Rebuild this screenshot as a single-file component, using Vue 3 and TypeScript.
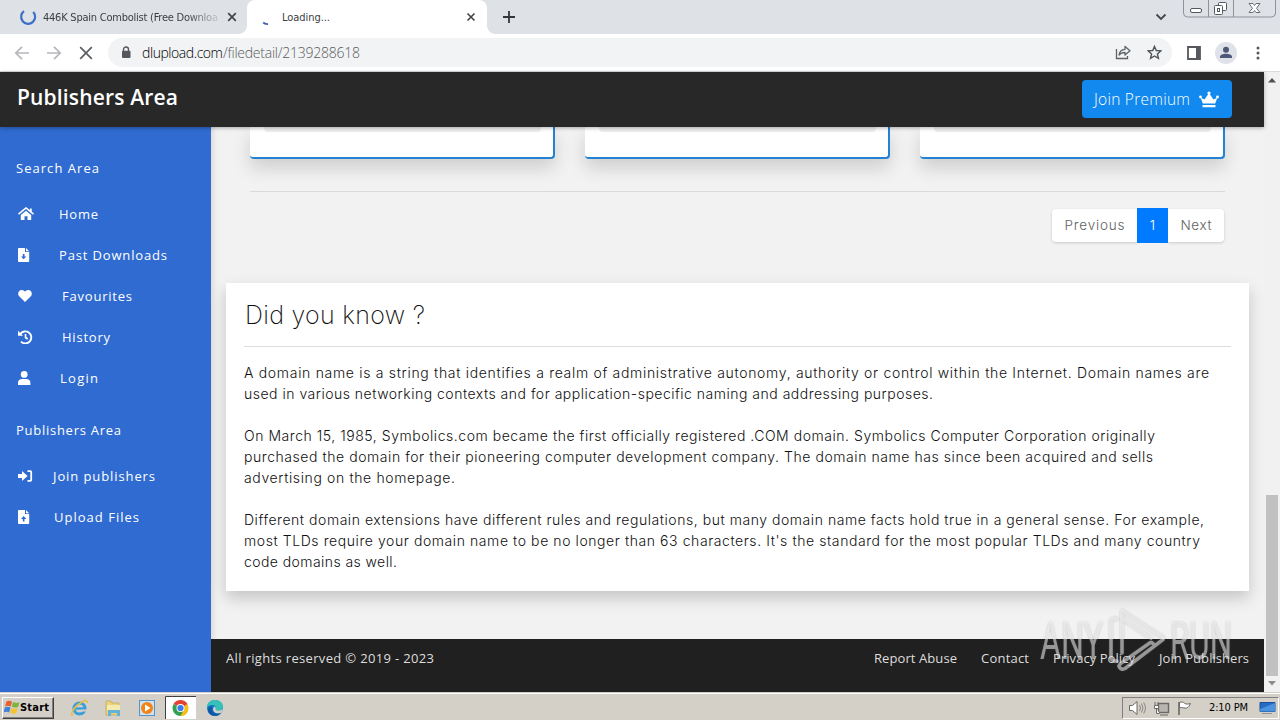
<script setup lang="ts">
import type { Directive } from 'vue'

// Spreads the letters of a single line of text over the given width in pixels.
const vFit: Directive<HTMLElement, number> = {
  mounted(el, binding) {
    const range = document.createRange()
    range.selectNodeContents(el)
    const natural = range.getBoundingClientRect().width
    const count = (el.textContent ?? '').trim().length
    el.style.width = `${binding.value}px`
    if (count > 1) el.style.letterSpacing = `${(binding.value - natural) / (count - 1)}px`
  },
}

interface NavItem { icon: string; label: string; offset: string; width: number }

const searchItems: NavItem[] = [
  { icon: 'home', label: 'Home', offset: 'o59', width: 39 },
  { icon: 'down', label: 'Past Downloads', offset: 'o59', width: 108 },
  { icon: 'heart', label: 'Favourites', offset: 'o62', width: 70 },
  { icon: 'history', label: 'History', offset: 'o62', width: 48 },
  { icon: 'user', label: 'Login', offset: 'o60', width: 38 },
]
const publisherItems: NavItem[] = [
  { icon: 'login', label: 'Join publishers', offset: 'o53', width: 102 },
  { icon: 'up', label: 'Upload Files', offset: 'o54', width: 85 },
]
const groups = [
  { title: 'Search Area', width: 83, items: searchItems },
  { title: 'Publishers Area', width: 105, items: publisherItems },
]

const paragraphs: { text: string; width: number }[][] = [
  [
    { text: 'A domain name is a string that identifies a realm of administrative autonomy, authority or control within the Internet. Domain names are', width: 965 },
    { text: 'used in various networking contexts and for application-specific naming and addressing purposes.', width: 689 },
  ],
  [
    { text: 'On March 15, 1985, Symbolics.com became the first officially registered .COM domain. Symbolics Computer Corporation originally', width: 911 },
    { text: 'purchased the domain for their pioneering computer development company. The domain name has since been acquired and sells', width: 909 },
    { text: 'advertising on the homepage.', width: 211 },
  ],
  [
    { text: 'Different domain extensions have different rules and regulations, but many domain name facts hold true in a general sense. For example,', width: 960 },
    { text: "most TLDs require your domain name to be no longer than 63 characters. It's the standard for the most popular TLDs and many country", width: 956 },
    { text: 'code domains as well.', width: 153 },
  ],
]

const links = [
  { label: 'Report Abuse', width: 83 },
  { label: 'Contact', width: 48 },
  { label: 'Privacy Policy', width: 82 },
  { label: 'Join Publishers', width: 90 },
]
</script>

<template>
  <div class="screen">
    <div class="tabstrip">
      <div class="tab">
        <svg class="spin" width="18" height="18" viewBox="0 0 18 18"><path d="M5 3.2A7 7 0 1 0 14.200 4" fill="none" stroke="#3b6fc9" stroke-width="2.2" /></svg>
        <span class="tab-title faded"><span v-fit="175" class="t">446K Spain Combolist (Free Downloa</span></span>
        <svg class="close" width="10" height="10" viewBox="0 0 10 10"><path d="M1.200 1.200l7.600 7.600M8.800 1.200l-7.600 7.600" stroke="#41454a" stroke-width="1.7" /></svg>
      </div>
      <div class="tab active">
        <svg class="spin" width="18" height="18" viewBox="0 0 18 18"><path d="M5.2 14.5Q7 16.3 10 16" fill="none" stroke="#3f63b5" stroke-width="1.8" /></svg>
        <span class="tab-title"><span v-fit="48" class="t">Loading...</span></span>
        <svg class="close" width="10" height="10" viewBox="0 0 10 10"><path d="M1.500 1.500l7 7M8.500 1.500l-7 7" stroke="#41454a" stroke-width="1.6" /></svg>
      </div>
      <svg class="plus" width="12" height="12" viewBox="0 0 12 12"><path d="M6 0v12M0 6h12" stroke="#33373b" stroke-width="1.8" /></svg>
      <svg class="chev" width="12" height="8" viewBox="0 0 12 8"><path d="M1.5 1.5L6 6l4.500-4.500" fill="none" stroke="#44474c" stroke-width="1.8" /></svg>
      <svg class="winctl" width="94" height="18" viewBox="0 0 94 18">
        <path d="M.5-2v15a4 4 0 0 0 4 4h84a4 4 0 0 0 4-4V-2M25.500 0v17M50.500 0v17" fill="none" stroke="#8e9299" />
        <rect x="7.500" y="8.500" width="11" height="4" rx="1.500" fill="#fff" stroke="#55595f" />
        <rect x="35.500" y="2.500" width="8" height="8" rx="1" fill="#fff" stroke="#55595f" />
        <rect x="31.500" y="5.500" width="8" height="9" rx="1" fill="#fff" stroke="#55595f" />
        <rect x="34.500" y="8.500" width="2" height="3" fill="#fff" stroke="#55595f" />
        <path d="M66 3.500h4l1.500 2 1.500-2h4L73.500 8.300 77 12.500h-4l-1.500-2-1.500 2h-4l3.500-4.200z" fill="#fff" stroke="#6b6f75" />
      </svg>
    </div>

    <div class="toolbar">
      <svg class="nav-ic" width="90" height="16" viewBox="0 0 90 16">
        <g fill="none" stroke-width="1.7">
          <path d="M15 8H2M8 1.800L1.800 8 8 14.200" stroke="#b5b7ba" />
          <path d="M33 8h13M40 1.800L46.200 8 40 14.200" stroke="#b5b7ba" />
          <path d="M66.200 2.200l11.600 11.600M77.800 2.200l-11.600 11.600" stroke="#5b5e62" />
        </g>
      </svg>
      <div class="omnibox">
        <svg class="lock" width="10" height="13" viewBox="0 0 10 13"><path d="M2.500 6V3.500a2.500 2.500 0 0 1 5 0V6" fill="none" stroke="#54585d" stroke-width="1.400" /><rect x="1" y="4.800" width="8.500" height="7.200" rx="1" fill="#54585d" /></svg>
        <span class="url"><span v-fit="81" class="host t">dlupload.com</span><span v-fit="137" class="path t">/filedetail/2139288618</span></span>
        <svg class="share" width="17" height="15" viewBox="0 0 17 15" fill="none" stroke="#5f6368" stroke-width="1.300"><path d="M1.500 4v9.500h11V11" /><path d="M4 10c.5-3.800 3-5.500 6-5.700V1.500l5 4.300-5 4.200V7.500C7.500 7.500 5.500 8 4 10z" stroke-linejoin="round" /></svg>
        <svg class="star" width="15" height="15" viewBox="0 0 16 16"><path d="M8 1.500l1.900 4.400 4.800.4-3.600 3.200 1.100 4.700L8 11.700l-4.200 2.500 1.100-4.700L1.300 6.300l4.800-.4z" fill="none" stroke="#4f5358" stroke-width="1.500" /></svg>
      </div>
      <svg class="side" width="14" height="14" viewBox="0 0 14 14"><path d="M1 1h12v12H1z" fill="none" stroke="#55585d" stroke-width="1.800" /><path d="M9 1h4v12H9z" fill="#55585d" /></svg>
      <svg class="avatar" width="22" height="22" viewBox="0 0 22 22"><circle cx="11" cy="11" r="11" fill="#dfe2e8" /><circle cx="11" cy="7.800" r="3" fill="#4c5a78" /><path d="M5 16v-1.200c0-4 12-4 12 0V16z" fill="#4c5a78" /></svg>
      <svg class="dots" width="4" height="14" viewBox="0 0 4 14" fill="#55585d"><circle cx="2" cy="2" r="1.500" /><circle cx="2" cy="7" r="1.500" /><circle cx="2" cy="12" r="1.500" /></svg>
    </div>

    <div class="page">
      <div class="view">
        <header class="navbar">
          <span v-fit="161" class="brand t">Publishers Area</span>
          <button class="premium">
            <span v-fit="96" class="t">Join Premium</span>
            <svg width="20" height="17" viewBox="0 0 20 17" fill="#fff"><path d="M3.800 12.500L1.700 6.800l3.800 1.700L9.300 3h1.400l3.800 5.500 3.800-1.700-2.100 5.700z" /><circle cx="10" cy="2" r="1.600" /><circle cx="1.500" cy="6" r="1.400" /><circle cx="18.500" cy="6" r="1.400" /><rect x="3.500" y="14" width="13" height="2.300" rx=".6" /></svg>
          </button>
        </header>
        <div class="body">
          <nav class="sidebar">
            <section v-for="g in groups" :key="g.title" class="group">
              <h4><span v-fit="g.width" class="t">{{ g.title }}</span></h4>
              <a v-for="i in g.items" :key="i.label" :class="i.offset">
                <svg width="16" height="14" viewBox="0 0 16 14" fill="#fff">
                  <template v-if="i.icon === 'home'"><path d="M.5 7.200L8 1l7.500 6.200" fill="none" stroke="#fff" stroke-width="1.600" /><path d="M11.800 1.500h1.900v4l-1.900-1.600zM2.800 8L8 3.700 13.200 8v5H9.500V9.200h-3V13H2.800z" /></template>
                  <template v-else-if="i.icon === 'down' || i.icon === 'up'">
                    <path d="M1 0h6v4h4.200v9.200a.8.8 0 0 1-.8.800H.8a.8.8 0 0 1-.8-.8V.8A.8.800 0 0 1 .8 0zM8 0l3.200 3.200H8z" />
                    <path v-if="i.icon === 'down'" d="M4.800 6h1.700v2.500h1.800L5.650 11.300 3 8.500h1.800z" fill="#2f6bd0" />
                    <path v-else d="M4.800 11.500h1.700V9h1.800L5.650 6.100 3 9h1.800z" fill="#2f6bd0" />
                  </template>
                  <path v-else-if="i.icon === 'heart'" d="M7 13L1.200 7.300C-.8 5.200.3 1 3.700 1 5.300 1 6.300 1.900 7 2.700 7.700 1.900 8.700 1 10.300 1c3.400 0 4.500 4.200 2.500 6.300z" />
                  <g v-else-if="i.icon === 'history'"><path d="M2.200 4.200A6 6 0 1 1 3 11.600" fill="none" stroke="#fff" stroke-width="1.900" /><path d="M0 .8l5 4.900H0z" /><path d="M7.500 4v3.500L9.700 9" fill="none" stroke="#fff" stroke-width="1.600" /></g>
                  <template v-else-if="i.icon === 'user'"><circle cx="6.200" cy="3.400" r="3.400" /><path d="M0 14v-2.200C0 9.200 1.800 8 4 8h4.400c2.200 0 4 1.200 4 3.800V14z" /></template>
                  <template v-else><path d="M0 5h4V2l5.600 5L4 12V9H0z" /><path d="M9.500 2.200h2.700c.7 0 1 .4 1 1v7.600c0 .6-.3 1-1 1H9.500" fill="none" stroke="#fff" stroke-width="1.800" /></template>
                </svg>
                <span v-fit="i.width" class="t">{{ i.label }}</span>
              </a>
            </section>
          </nav>
          <div class="content">
            <div class="results">
              <div class="tiles"><div v-for="n in 3" :key="n" class="tile"><div class="tile-inner"></div></div></div>
              <div class="rule"></div>
              <div class="pager">
                <span class="pg prev"><span v-fit="60" class="t">Previous</span></span>
                <span class="pg on">1</span>
                <span class="pg next"><span v-fit="31" class="t">Next</span></span>
              </div>
            </div>
            <article class="fact">
              <h2><span v-fit="180" class="t">Did you know ?</span></h2>
              <p v-for="(p, k) in paragraphs" :key="k">
                <span v-for="l in p" :key="l.text" v-fit="l.width" class="line t">{{ l.text }}</span>
              </p>
            </article>
            <footer>
              <span v-fit="208" class="t">All rights reserved © 2019 - 2023</span>
              <div class="links"><a v-for="l in links" :key="l.label" v-fit="l.width" class="t">{{ l.label }}</a></div>
            </footer>
          </div>
        </div>
      </div>
      <div class="scrollbar">
        <svg width="16" height="17" viewBox="0 0 16 17"><path d="M4 10.500l4-4.500 4 4.500z" fill="#505050" /></svg>
        <div class="thumb"></div>
        <svg width="16" height="17" viewBox="0 0 16 17"><path d="M4 6l4 4.500L12 6z" fill="#8b8b8b" /></svg>
      </div>
    </div>

    <div class="taskbar">
      <div class="start">
        <svg width="16" height="15" viewBox="0 0 16 15"><path d="M2.500 1.500Q5-.2 8 1.700L6.800 6.500Q4 5 1 6.500z" fill="#e8602c" /><path d="M9 2.100q3 1.500 6.500.2L14 7q-3 1.200-6.200-.2z" fill="#7db53c" /><path d="M.8 7.600Q4 6 6.500 7.600L5.200 12.500Q3 11-.4 12.400z" fill="#3f83d8" /><path d="M7.500 8q3 1.500 6.200.3l-1.400 4.800q-3 1.200-6-.3z" fill="#f5c32c" /></svg>
        <span v-fit="29" class="t">Start</span>
      </div>
      <svg class="quick" width="170" height="24" viewBox="0 0 170 24">
        <circle cx="19.500" cy="12.500" r="5.500" fill="none" stroke="#39a0dc" stroke-width="3.200" /><path d="M15 12.500h10" stroke="#39a0dc" stroke-width="2.400" /><path d="M21 14.500h6" stroke="#d4d0c8" stroke-width="2" /><path d="M13 19c-4 1 1-9 9-13 4-2 6-2 5 1" fill="none" stroke="#e9bd43" stroke-width="1.500" />
        <path d="M46 5h5l1 2h7v12H46z" fill="#e9d37c" stroke="#c3aa58" stroke-width=".8" /><path d="M47 9h13v5H47z" fill="#f6ebae" /><path d="M48 20v-6h12v6h-3v-3h-6v3z" fill="#62b3d7" />
        <rect x="79.500" y="4.500" width="15" height="15" fill="#cfe2f2" stroke="#5795c9" /><circle cx="87" cy="12" r="6" fill="#f08418" /><path d="M85 8.500l5.500 3.500-5.500 3.500z" fill="#fff" />
        <path d="M105.500 23V.5H136" fill="none" stroke="#404040" /><path d="M106 1h30v22h-30z" fill="#fff" />
        <path d="M120.500 12L113.600 8a8 8 0 0 1 13.800 0z" fill="#e34133" /><path d="M120.500 12L127.400 8a8 8 0 0 1-6.900 12z" fill="#f6bd1b" /><path d="M120.500 12v8a8 8 0 0 1-6.900-12z" fill="#35a052" /><path d="M120.500 8h7l-7 4z" fill="#e34133" /><path d="M117 14l3.500 6 3-5z" fill="#35a052" /><path d="M123.500 15l-3 5a8 8 0 0 0 7.500-5z" fill="#f6bd1b" /><circle cx="120.500" cy="12" r="4" fill="#fff" /><circle cx="120.500" cy="12" r="3.100" fill="#397ee9" />
        <circle cx="155" cy="12" r="8" fill="#1475c8" /><path d="M147 12c0-11 16-10 16-1 0 4-5 5-8 3 1-2 1-5-2-5-3-.5-6 1-6 3z" fill="#35c0b8" /><path d="M152 11c-1 6 4 8 9 6-4 5-13 3-13-3 0-2 2-4 4-3z" fill="#0c58a5" /><path d="M154 10.500c1.800 0 2 2 1.500 3.200 2 1.600 5 1.300 7.500-.6-.4 1.800-1 2.800-2 3.800-5 1.500-8.500-1-7.800-4.400z" fill="#d4d0c8" />
      </svg>
      <div class="tray">
        <svg width="62" height="18" viewBox="0 0 62 18" fill="#fff" stroke="#6a6864">
          <path d="M.5 6.500h3L8 2.500v13l-4.500-4h-3z" /><path d="M10.500 6q2 3 0 6M12.500 4.500q3 4.500 0 9M14.700 3.500q3.500 5.500 0 11" fill="none" stroke="#8a8782" />
          <rect x="29.500" y="4.500" width="10" height="9" fill="#b7b5b0" stroke-width="1.400" /><path d="M31 16h8M26 3v3M29 3v3M25.500 6.500h4v3h-4zM27.500 10v4.500h3" />
          <path d="M50 3v13" stroke-width="1.600" /><path d="M50.500 3.500c2-1 4-.5 5 .8 1.500 1 3.500 1 6 .2-1 2-2 4-4 4.500-2 .5-4-.8-7-.3z" />
        </svg>
        <span v-fit="39" class="clock t">2:10 PM</span>
        <svg class="desk" width="17" height="14" viewBox="0 0 17 14"><path d="M1 1.500h15v9H1z" fill="#286bc6" stroke="#184f98" /><path d="M1 8L16 2v8.500H1z" fill="#4c93df" /><path d="M3 12.500h10" stroke="#8b95a1" /></svg>
      </div>
    </div>

    <svg class="watermark" width="200" height="70" viewBox="0 0 200 70">
      <g class="wm-text">
        <text x="3" y="54" textLength="63" lengthAdjust="spacingAndGlyphs">ANY</text>
        <text x="133" y="54" textLength="62" lengthAdjust="spacingAndGlyphs">RUN</text>
      </g>
      <g fill="none" stroke-linejoin="round" stroke-linecap="round" class="wm-mark">
        <path d="M80 14q-6-2-6 4v34q0 5 6 4M85 48V6L126 32.500M85 14l29 19" />
        <path d="M126 34.500L88 63.500q-4 2-6-2 0-2 3-4l27-19q2-2 4 0" />
      </g>
    </svg>
  </div>
</template>

<style>
html, body { margin: 0; overflow: hidden; }
</style>

<style scoped>
* { box-sizing: border-box; }
.screen { position: relative; width: 1280px; height: 720px; overflow: hidden; display: flex; flex-direction: column; background: #fff; font-family: "Open Sans", "Noto Sans", sans-serif; }
svg { flex: none; display: block; }
.t { display: inline-block; white-space: nowrap; flex: none; }
.tabstrip { height: 34px; display: flex; background: #dee1e6; flex: none; }
.tab { width: 247px; height: 34px; display: flex; align-items: center; padding-left: 19px; font: 11px "DejaVu Sans Condensed", "DejaVu Sans", sans-serif; font-stretch: condensed; color: #3c4043; }
.tab .spin { margin-right: 6px; }
.tab-title { width: 175px; }
.faded { -webkit-mask-image: linear-gradient(90deg, #000 82%, rgba(0,0,0,.15)); mask-image: linear-gradient(90deg, #000 82%, rgba(0,0,0,.15)); }
.close { margin-left: 9px; }
.tab.active { width: 240px; background: #fff; border-radius: 8px 8px 0 0; padding-left: 11px; position: relative; }
.tab.active::before, .tab.active::after { content: ""; position: absolute; bottom: 0; width: 8px; height: 8px; }
.tab.active::before { left: -8px; background: radial-gradient(circle at 0 0, transparent 7.5px, #fff 8px); }
.tab.active::after { right: -8px; background: radial-gradient(circle at 100% 0, transparent 7.5px, #fff 8px); }
.active .tab-title { margin-left: 0; width: 180px; }
.active .close { margin-left: 4px; }
.plus { margin: 11px 0 0 16px; }
.chev { margin: 13px 0 0 auto; }
.winctl { margin-left: 16px; margin-right: 3px; }
.toolbar { height: 38px; flex: none; display: flex; align-items: center; border-bottom: 1px solid #d9dbde; padding-left: 14px; }
.nav-ic { margin-right: 4px; }
.omnibox { width: 1064px; height: 29px; border-radius: 15px; background: #f1f3f4; display: flex; align-items: center; padding: 0 10px 0 13px; }
.url { margin-left: 11px; margin-right: auto; display: flex; font-size: 14px; font-weight: 300; line-height: 18px; }
.host { color: #000; }
.path { color: #595c60; }
.share { margin-right: 15px; }
.side { margin-left: 15px; }
.avatar { margin-left: 14px; }
.dots { margin-left: 19px; }
.page { height: 620px; display: flex; flex: none; }
.view { width: 1264px; display: flex; flex-direction: column; }
.navbar { height: 55px; flex: none; background: #282828; display: flex; align-items: center; justify-content: space-between; padding: 0 32px 1px 17px; position: relative; box-shadow: 0 1px 4px rgba(0,0,0,.3); z-index: 1; }
.brand { font-size: 21px; line-height: 30px; font-weight: 600; color: #fff; margin-top: -5px; }
.premium { width: 150px; height: 38px; border: 0; border-radius: 4px; background: #1189ee; display: flex; align-items: center; gap: 9px; padding: 0 12px; font: 300 15.5px "Open Sans", sans-serif; color: #fff; }
.body { display: flex; height: 565px; }
.sidebar { width: 211px; flex: none; background: #2f6bd0; padding-top: 16px; color: #fff; font-size: 13px; font-weight: 400; box-shadow: 1px 0 8px rgba(0,0,0,.24); }
.group + .group { margin-top: 7px; }
.group h4 { height: 50px; line-height: 51px; margin: 0; padding-left: 16px; font-size: 13px; font-weight: 400; }
.group a { height: 41px; display: flex; align-items: center; padding-left: 18px; }
.o53 .t { margin-left: 19px; }
.o54 .t { margin-left: 20px; }
.o59 .t { margin-left: 25px; }
.o60 .t { margin-left: 26px; }
.o62 .t { margin-left: 28px; }
.content { flex: 1; background: #f2f2f2; display: flex; flex-direction: column; font-family: Inter, sans-serif; box-shadow: inset 6px 0 7px -5px rgba(0,0,0,.14); }
.results { padding: 0 39px; height: 156px; flex: none; }
.tiles { display: flex; gap: 30px; }
.tile { width: 305px; height: 32px; background: #fff; border: solid #2482d4; border-width: 0 2px 2px 0; border-radius: 0 0 4px 4px; box-shadow: 0 9px 18px rgba(0,0,0,.15); padding: 0 12px 0 14px; }
.tile-inner { height: 5px; background: #eee; border-radius: 0 0 4px 4px; }
.rule { margin-top: 32px; height: 1px; width: 975px; background: #dadada; }
.pager { display: flex; margin: 16px 0 0 802px; width: 173px; height: 35px; font-size: 13.5px; line-height: 33px; color: #5f6265; font-weight: 300; align-items: center; }
.pg { height: 33px; background: #fff; box-shadow: 0 1px 3px rgba(0,0,0,.17); text-align: center; }
.prev { width: 85px; border-radius: 4px 0 0 4px; }
.on { width: 31px; height: 35px; line-height: 35px; background: #007bff; color: #fff; box-shadow: none; z-index: 1; }
.next { width: 56px; border-radius: 0 4px 4px 0; }
.fact { margin: 0 15px; height: 308px; flex: none; background: #fff; padding: 0 18px; box-shadow: 0 7px 15px rgba(0,0,0,.19); color: #101010; }
.fact h2 { height: 64px; line-height: 64px; margin: 0 0 15px; border-bottom: 1px solid #dedede; font-size: 25px; font-weight: 200; padding-left: 1px; }
.fact p { margin: 0 0 21px; font-size: 14px; font-weight: 350; line-height: 21px; }
.line { display: block; }
footer { margin-top: 48px; height: 53px; background: #202020; color: #dedede; display: flex; justify-content: space-between; padding: 10px 15px; font: 400 13px/18px "Open Sans", sans-serif; }
.links { display: flex; gap: 24px; }
.scrollbar { width: 16px; background: #f1f1f1; display: flex; flex-direction: column; }
.thumb { width: 12px; height: 181px; background: #c1c1c1; margin: auto 2px 0; }
.scrollbar svg:last-child { margin-top: -1px; }
.taskbar { height: 28px; background: #d4d0c8; border-top: 1px solid #d4d0c8; box-shadow: inset 0 1px #fff; display: flex; align-items: center; padding-top: 2px; flex: none; font-family: "DejaVu Sans Condensed", "DejaVu Sans", sans-serif; font-stretch: condensed; color: #000; }
.start { width: 52px; height: 22px; margin-left: 2px; border: 1px solid; border-color: #fff #404040 #404040 #fff; box-shadow: inset -1px -1px #808080; display: flex; align-items: center; padding-left: 1px; gap: 0; font-size: 11px; font-weight: 700; }
.quick { margin: 0 0 0 6px; }
.tray { margin-left: auto; width: 157px; height: 22px; border: 1px solid; border-color: #808080 #fff #fff #808080; display: flex; align-items: center; padding-left: 6px; font-size: 11px; margin-right: 1px; }
.clock { margin-left: 18px; }
.desk { margin-left: 11px; }
.watermark { position: absolute; left: 1037px; top: 605px; filter: drop-shadow(0 0 1.200px rgba(90,90,90,.6)); }
.wm-text { font: 400 51px Roboto, sans-serif; fill: rgba(255,255,255,.5); }
.wm-mark { stroke: rgba(255,255,255,.5); stroke-width: 3.600px; }
</style>
